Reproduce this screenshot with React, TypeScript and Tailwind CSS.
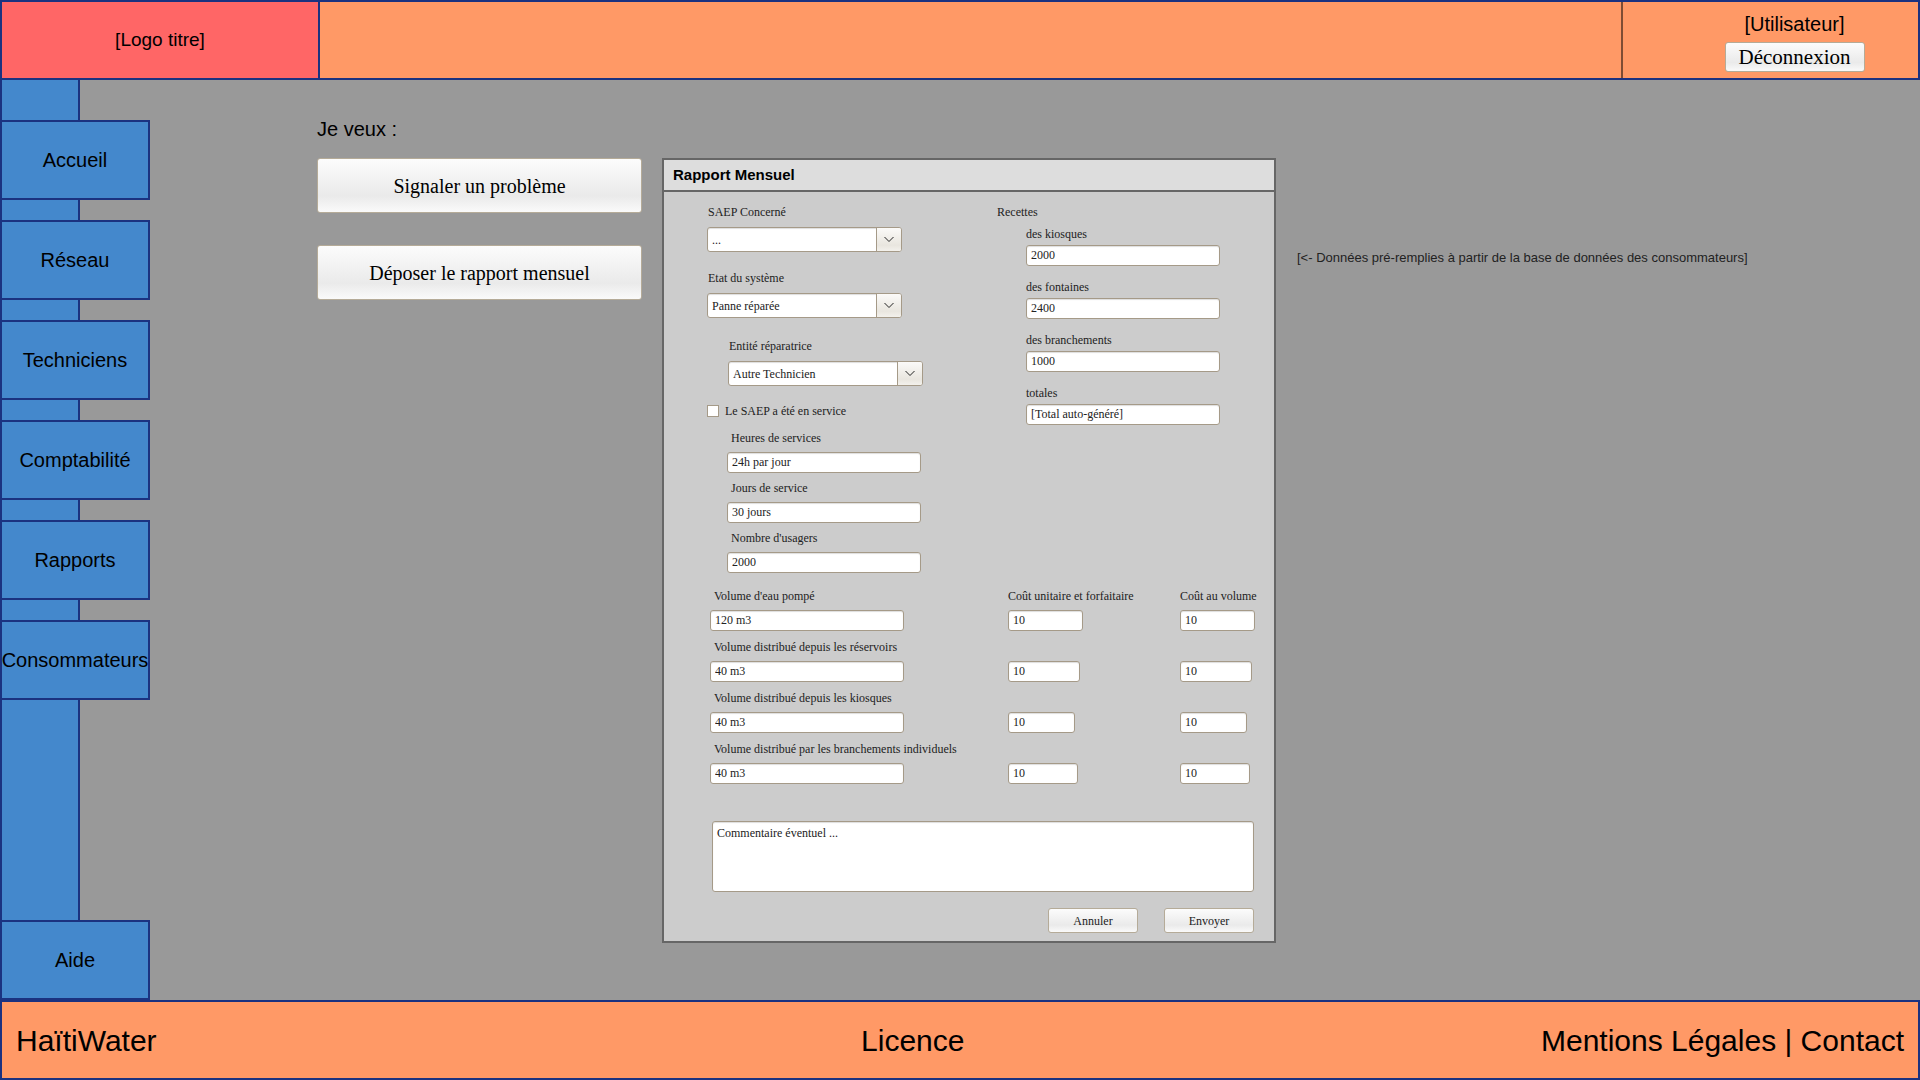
import type { ReactNode } from "react";

const NAV_ITEMS = ["Accueil", "Réseau", "Techniciens", "Comptabilité", "Rapports", "Consommateurs"];

const SERVICE_FIELDS = [
  { id: "heures", label: "Heures de services", value: "24h par jour" },
  { id: "jours", label: "Jours de service", value: "30 jours" },
  { id: "usagers", label: "Nombre d'usagers", value: "2000" },
];

const INCOME_FIELDS = [
  { id: "kiosques", label: "des kiosques", value: "2000" },
  { id: "fontaines", label: "des fontaines", value: "2400" },
  { id: "branchements", label: "des branchements", value: "1000" },
  { id: "totales", label: "totales", value: "[Total auto-généré]" },
];

const VOLUME_ROWS = [
  { id: "pompe", label: "Volume d'eau pompé", value: "120 m3", cost: "w-[75px]" },
  { id: "reservoirs", label: "Volume distribué depuis les réservoirs", value: "40 m3", cost: "w-[72px]" },
  { id: "vol-kiosques", label: "Volume distribué depuis les kiosques", value: "40 m3", cost: "w-[67px]" },
  { id: "individuels", label: "Volume distribué par les branchements individuels", value: "40 m3", cost: "w-[70px]" },
];

const GLOSSY = "bg-linear-to-b from-[#fcfcfc] via-[#eaeaea] via-70% to-[#fafafa] border border-[#b5ab98] rounded-[3px]";

const INPUT =
  "block h-[21px] rounded-[3px] border border-[#a59a88] bg-white px-1 text-xs leading-4 text-[#222] shadow-[inset_0_1px_1px_#dddddd] outline-none";

function NavTab({ children }: { children: ReactNode }) {
  return (
    <a
      href="#"
      className="flex h-20 w-[150px] shrink-0 items-center justify-center border-2 border-[#1b3280] bg-[#4488cc] text-xl whitespace-nowrap text-black"
    >
      {children}
    </a>
  );
}

function Label({ htmlFor, children }: { htmlFor: string; children: ReactNode }) {
  return (
    <label htmlFor={htmlFor} className="block text-xs leading-4 whitespace-nowrap">
      {children}
    </label>
  );
}

function SelectField({ id, label, value }: { id: string; label: string; value: string }) {
  return (
    <div className="flex flex-col gap-[7px]">
      <div className="pl-px">
        <Label htmlFor={id}>{label}</Label>
      </div>
      <div className="relative h-[25px] w-[195px] overflow-hidden rounded-[3px] border border-[#a59a88] bg-white shadow-[inset_0_1px_1px_#dddddd]">
        <select
          id={id}
          defaultValue={value}
          className="h-full w-full appearance-none bg-transparent pr-7 pl-1 text-xs text-[#222] outline-none"
        >
          <option>{value}</option>
        </select>
        <span className="pointer-events-none absolute inset-y-0 right-0 flex w-[25px] items-center justify-center border-l border-[#a59a88] bg-linear-to-b from-[#fbfaf8] via-[#e9e6df] via-75% to-[#f3f1ec]">
          <svg width="10" height="7" viewBox="0 0 10 7" fill="none" stroke="#222" strokeWidth="1">
            <path d="M0.5 1 L5 5.5 L9.5 1" />
          </svg>
        </span>
      </div>
    </div>
  );
}

export default function App() {
  return (
    <div className="flex min-h-screen flex-col bg-[#999999] font-['Liberation_Sans',Arial,sans-serif] text-black">
      <header className="flex h-20 border-2 border-[#1b3280] bg-[#ff9966] text-xl">
        <div className="flex w-[318px] items-center justify-center border-r-2 border-[#1b3280] bg-[#ff6666] text-[19px]">
          [Logo titre]
        </div>
        <div className="ml-auto flex w-[297px] flex-col items-center gap-1 border-l-2 border-[#7f4c33] pt-2 pl-12">
          <span className="leading-7">[Utilisateur]</span>
          <button
            type="button"
            className={`${GLOSSY} h-[30px] w-[140px] font-['Liberation_Serif',serif] text-[21px] leading-6`}
          >
            Déconnexion
          </button>
        </div>
      </header>

      <div className="flex flex-1">
        <nav className="flex w-20 shrink-0 flex-col gap-5 border-x-2 border-[#1b3280] bg-[#4488cc] pt-10">
          {NAV_ITEMS.map((item) => (
            <div key={item} className="-ml-0.5">
              <NavTab>{item}</NavTab>
            </div>
          ))}
          <div className="mt-auto -ml-0.5">
            <NavTab>Aide</NavTab>
          </div>
        </nav>

        <main className="ml-[237px] flex flex-1 flex-col gap-[15px] pt-9 pb-14">
          <h1 className="text-xl leading-[27px]">Je veux :</h1>
          <div className="flex items-start gap-5">
            <div className="flex w-[325px] shrink-0 flex-col gap-8 font-['Liberation_Serif',serif] text-xl">
              <button type="button" className={`${GLOSSY} h-[55px]`}>
                Signaler un problème
              </button>
              <button type="button" className={`${GLOSSY} h-[55px]`}>
                Déposer le rapport mensuel
              </button>
            </div>

            <section className="w-[614px] shrink-0 border-2 border-[#666666] bg-[#cccccc]">
              <h2 className="border-b-2 border-[#666666] bg-[#dddddd] px-[9px] text-[15px] leading-[30px] font-bold">
                Rapport Mensuel
              </h2>
              <form className="pt-3 pr-5 pb-2 pl-[43px] font-['Liberation_Serif',serif] text-xs text-[#222]">
                <div className="flex">
                  <div className="w-[290px]">
                    <div className="flex flex-col gap-[18px]">
                      <SelectField id="saep" label="SAEP Concerné" value="..." />
                      <SelectField id="etat" label="Etat du système" value="Panne réparée" />
                    </div>
                    <div className="mt-5 pl-[21px]">
                      <SelectField id="entite" label="Entité réparatrice" value="Autre Technicien" />
                    </div>
                    <div className="mt-[17px] flex items-center gap-1.5">
                      <input
                        id="service"
                        type="checkbox"
                        className="size-3 appearance-none border border-[#a59a88] bg-white checked:bg-[#4488cc]"
                      />
                      <Label htmlFor="service">Le SAEP a été en service</Label>
                    </div>
                    <div className="mt-[11px] flex flex-col gap-[7px] pl-5">
                      {SERVICE_FIELDS.map((f) => (
                        <div key={f.id} className="flex flex-col gap-1.5">
                          <div className="pl-1">
                            <Label htmlFor={f.id}>{f.label}</Label>
                          </div>
                          <input id={f.id} defaultValue={f.value} className={`${INPUT} w-[194px]`} />
                        </div>
                      ))}
                    </div>
                  </div>

                  <fieldset>
                    <legend className="leading-4">Recettes</legend>
                    <div className="mt-1.5 flex flex-col gap-[13px] pl-[29px]">
                      {INCOME_FIELDS.map((f) => (
                        <div key={f.id} className="flex flex-col gap-[3px]">
                          <Label htmlFor={f.id}>{f.label}</Label>
                          <input id={f.id} defaultValue={f.value} className={`${INPUT} w-[194px]`} />
                        </div>
                      ))}
                    </div>
                  </fieldset>
                </div>

                <div className="mt-[15px] flex flex-col gap-2 pl-[3px]">
                  {VOLUME_ROWS.map((row, i) => (
                    <div key={row.id} className="grid grid-cols-[298px_172px_1fr] items-end">
                      <div className="flex flex-col gap-1.5">
                        <div className="pl-1">
                          <Label htmlFor={row.id}>{row.label}</Label>
                        </div>
                        <input id={row.id} defaultValue={row.value} className={`${INPUT} w-[194px]`} />
                      </div>
                      <div className="flex flex-col gap-1.5">
                        {i === 0 && <Label htmlFor={`${row.id}-unitaire`}>Coût unitaire et forfaitaire</Label>}
                        <input
                          id={`${row.id}-unitaire`}
                          aria-label="Coût unitaire et forfaitaire"
                          defaultValue="10"
                          className={`${INPUT} ${row.cost}`}
                        />
                      </div>
                      <div className="flex flex-col gap-1.5">
                        {i === 0 && <Label htmlFor={`${row.id}-volume`}>Coût au volume</Label>}
                        <input
                          id={`${row.id}-volume`}
                          aria-label="Coût au volume"
                          defaultValue="10"
                          className={`${INPUT} ${row.cost}`}
                        />
                      </div>
                    </div>
                  ))}
                </div>

                <div className="mt-[37px] pl-[5px]">
                  <textarea
                    aria-label="Commentaire"
                    defaultValue="Commentaire éventuel ..."
                    className="block h-[71px] w-full resize-none rounded-[3px] border border-[#a59a88] bg-white px-1 py-[3px] text-xs leading-4 text-[#222] shadow-[inset_0_1px_1px_#dddddd] outline-none"
                  />
                </div>

                <div className="mt-4 flex justify-end gap-[26px]">
                  <button type="button" className={`${GLOSSY} h-[25px] w-[90px]`}>
                    Annuler
                  </button>
                  <button type="submit" className={`${GLOSSY} h-[25px] w-[90px]`}>
                    Envoyer
                  </button>
                </div>
              </form>
            </section>

            <p className="mt-[91px] pl-px text-[13px] leading-[18px] text-[#222]">
              [&lt;- Données pré-remplies à partir de la base de données des consommateurs]
            </p>
          </div>
        </main>
      </div>

      <footer className="grid h-20 grid-cols-[17fr_4fr_19fr] items-center border-2 border-[#1b3280] bg-[#ff9966] px-3.5 text-[30px]">
        <span>HaïtiWater</span>
        <a href="#" className="text-center">
          Licence
        </a>
        <span className="text-right">
          <a href="#">Mentions Légales</a> | <a href="#">Contact</a>
        </span>
      </footer>
    </div>
  );
}
